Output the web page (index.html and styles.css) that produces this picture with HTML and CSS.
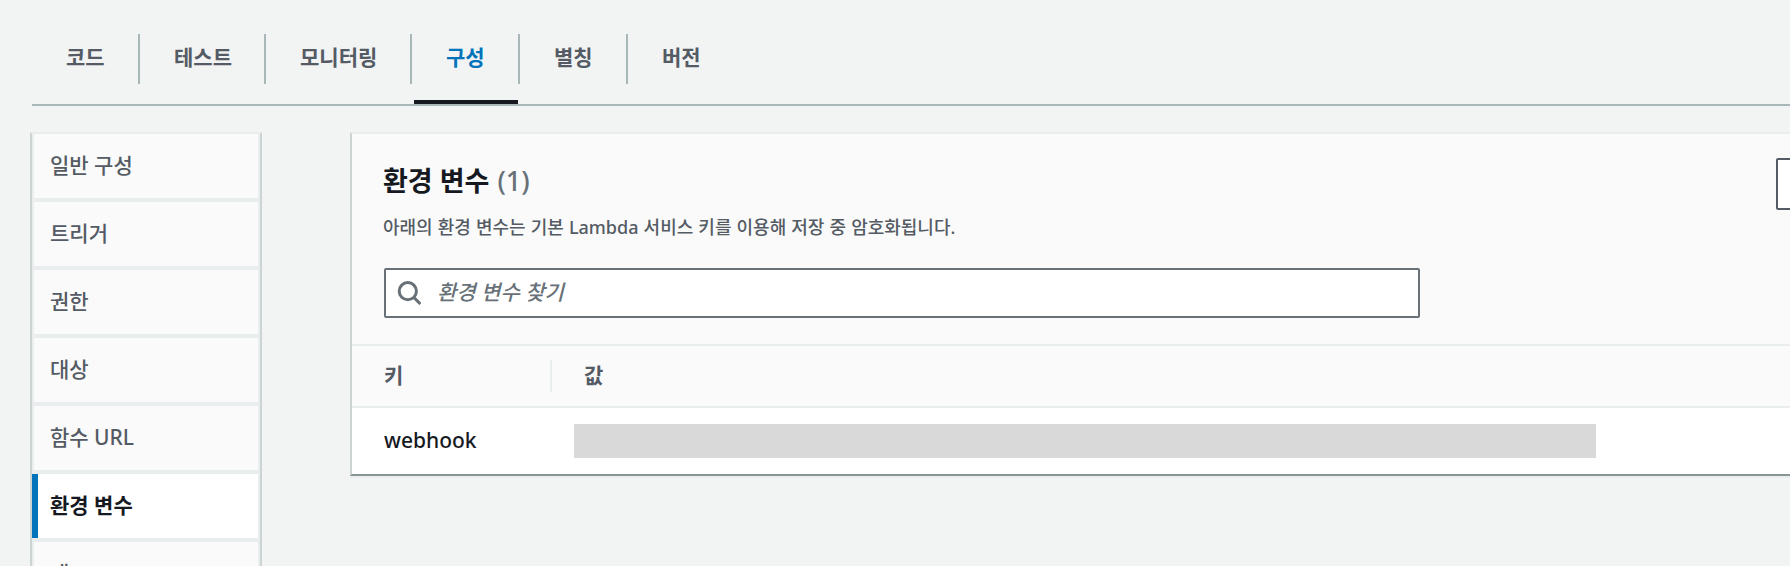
FILE: index.html
```html
<!DOCTYPE html>
<html lang="ko">
<head>
<meta charset="utf-8">
<title>환경 변수</title>
<link rel="stylesheet" href="styles.css">
</head>
<body>
<nav class="tabs">
  <a class="tab"><span>코드</span></a>
  <a class="tab"><span>테스트</span></a>
  <a class="tab"><span>모니터링</span></a>
  <a class="tab tab-active"><span>구성</span></a>
  <a class="tab"><span>별칭</span></a>
  <a class="tab"><span>버전</span></a>
</nav>
<div class="layout">
  <aside class="side">
    <a class="side-item">일반 구성</a>
    <a class="side-item">트리거</a>
    <a class="side-item">권한</a>
    <a class="side-item">대상</a>
    <a class="side-item">함수 URL</a>
    <a class="side-item side-active">환경 변수</a>
    <a class="side-item">태그</a>
  </aside>
  <main class="panel">
    <header class="panel-head">
      <div class="head-row">
        <div>
          <h2 class="title">환경 변수 <span class="count">(1)</span></h2>
          <p class="desc">아래의 환경 변수는 기본 Lambda 서비스 키를 이용해 저장 중 암호화됩니다.</p>
        </div>
        <button class="edit" type="button" aria-label="편집"></button>
      </div>
      <div class="search">
        <svg class="search-icon" width="24" height="24" viewBox="0 0 24 24" fill="none" stroke="#687078" stroke-width="3"><circle cx="10.8" cy="10.2" r="8.6"/><path d="M16.8 16.4 23.4 23"/></svg>
        <span class="placeholder">환경 변수 찾기</span>
      </div>
    </header>
    <div class="row row-head">
      <div class="cell-key">키</div>
      <div class="cell-value">값</div>
    </div>
    <div class="row row-data">
      <div class="cell-key">webhook</div>
      <div class="masked"></div>
    </div>
  </main>
</div>
</body>
</html>
```
FILE: styles.css
```css
* { box-sizing: border-box; }
body {
  margin: 0;
  height: 566px;
  overflow: hidden;
  background: #f2f3f3;
  color: #545b64;
  font-family: "Noto Sans", "Noto Sans CJK KR", sans-serif;
  font-size: 21px;
  font-weight: 500;
  line-height: 32px;
}
.tabs {
  display: grid;
  grid-template-columns: 108px 126px 146px 108px 108px 108px;
  margin-left: 32px;
  padding-top: 34px;
  height: 106px;
  border-bottom: 2px solid #aab7b8;
}
.tab { font-weight: 700; height: 70px; }
.tab span {
  display: block;
  height: 50px;
  padding: 7px 0 0 34px;
  border-right: 2px solid #aab7b8;
}
.tab:last-child span { border-right: 0; }
.tab-active {
  color: #0073bb;
  background: linear-gradient(#16191f, #16191f) 2px 66px / 104px 4px no-repeat;
}
.layout {
  display: grid;
  grid-template-columns: 232px 1440px;
  column-gap: 88px;
  padding: 26px 0 0 30px;
}
.side {
  display: flex;
  flex-direction: column;
  gap: 4px;
  height: 434px;
  overflow: hidden;
  padding: 0 2px 0 0;
  background: #eaeded;
  border: 2px solid #ccd3d3;
  border-top-color: #eaeded;
  border-bottom: 0;
}
.side-item {
  flex: none;
  height: 64px;
  margin-left: 2px;
  padding: 15px 0 0 16px;
  background: #fafafa;
}
.side-active {
  margin-left: 0;
  padding-left: 12px;
  border-left: 6px solid #0073bb;
  background: #fff;
  color: #16191f;
  font-weight: 700;
}
.panel {
  align-self: start;
  border-top: 2px solid #eaeded;
  border-left: 2px solid #ccd3d3;
  border-bottom: 2px solid #879596;
  box-shadow: 0 2px 0 #ebeded;
}
.panel-head {
  height: 212px;
  padding: 23px 0 0 32px;
  background: #fafafa;
  border-bottom: 2px solid #eaeded;
}
.head-row { display: flex; height: 111px; }
.head-row > div { width: 1392px; flex: none; }
.title {
  margin: 0 0 0 -1px;
  color: #16191f;
  font-size: 27px;
  font-weight: 700;
  line-height: 48px;
}
.count { margin-left: 1px; color: #687078; font-weight: 500; }
.desc { margin: 8px 0 0 -1px; font-size: 18px; line-height: 28px; word-spacing: 0.4px; }
.edit {
  flex: none;
  width: 100px;
  height: 52px;
  margin-top: 1px;
  border: 2px solid #545b64;
  border-radius: 2px;
  background: #fff;
}
.search {
  display: flex;
  align-items: center;
  width: 1036px;
  height: 50px;
  padding-left: 11px;
  background: #fff;
  border: 2px solid #687078;
  border-radius: 2px;
}
.placeholder { margin: -2px 0 0 16px; color: #687078; font-style: italic; }
.row { display: flex; padding-left: 32px; }
.row-head {
  height: 62px;
  padding-top: 14px;
  background: #fafafa;
  border-bottom: 2px solid #eaeded;
  font-weight: 700;
}
.row-head div { line-height: 30px; }
.row-head .cell-key { width: 168px; height: 32px; border-right: 2px solid #eaeded; }
.cell-value { padding-left: 32px; }
.row-data { height: 66px; padding-top: 16px; background: #fff; color: #16191f; }
.row-data .cell-key { width: 190px; }
.masked { width: 1022px; height: 34px; background: #d9d9d9; }
```
